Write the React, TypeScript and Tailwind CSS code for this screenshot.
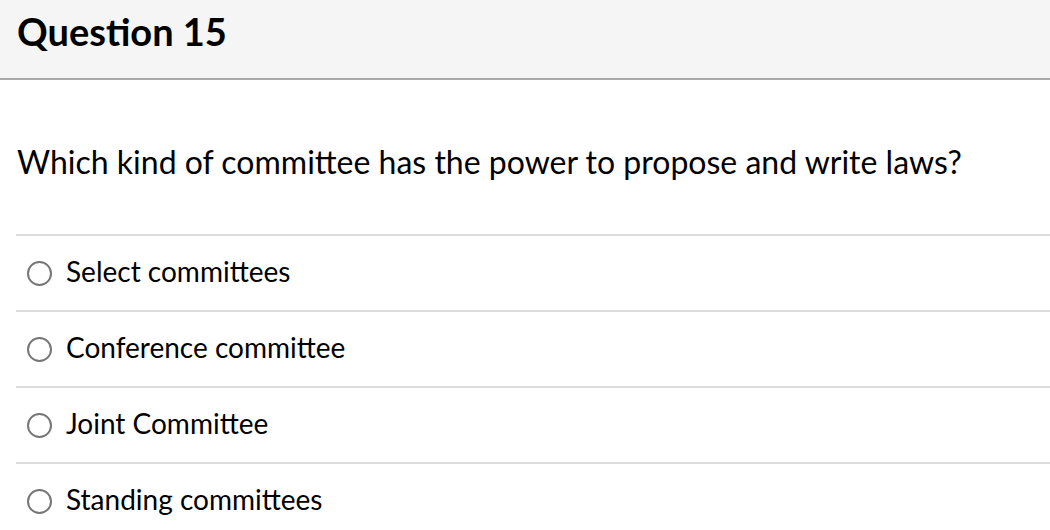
const options = [
  "Select committees",
  "Conference committee",
  "Joint Committee",
  "Standing committees",
];

const Radio = () => (
  <span className="inline-block w-[25px] h-[25px] rounded-full border-2 border-[#767676] bg-white shrink-0" />
);

export default function App() {
  return (
    <div
      className="w-[1050px] h-[530px] overflow-hidden bg-white text-black"
      style={{ fontFamily: "Lato, 'Liberation Sans', sans-serif" }}
    >
      <div className="h-[80px] bg-[#f5f5f5] border-b-2 border-[#a9a9a9] pl-[17px] pt-[12px]">
        <h2 className="text-[38px] leading-[38px] font-bold">Question 15</h2>
      </div>
      <div className="pl-4">
        <p className="pl-px pt-[66px] pb-[56px] text-[32px] leading-[32px]">
          Which kind of committee has the power to propose and write laws?
        </p>
        <ul>
          {options.map((opt) => (
            <li
              key={opt}
              className="h-[76px] border-t-2 border-[#dcdcdc] flex items-center gap-[14px] pl-[11px]"
            >
              <Radio />
              <span className="text-[28px] leading-[28px] -mt-[5px]">{opt}</span>
            </li>
          ))}
        </ul>
      </div>
    </div>
  );
}
